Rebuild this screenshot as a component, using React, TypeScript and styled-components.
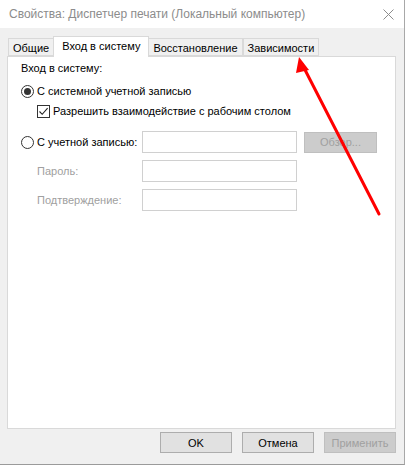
import React from "react";
import styled, { createGlobalStyle } from "styled-components";

const Global = createGlobalStyle`
  html, body { margin: 0; padding: 0; background: #ffffff; }
  body { font-family: "Liberation Sans", Arial, sans-serif; font-size: 11px; color: #000; }
  * { box-sizing: border-box; }
`;

const Window = styled.div`
  position: relative;
  width: 405px;
  height: 465px;
  background: #f0f0f0;
  border-right: 1px solid #a8a8a8;
  border-bottom: 1px solid #9a9a9a;
  box-shadow: 0 1px 2px rgba(0, 0, 0, 0.25);
  display: flex;
  flex-direction: column;
  overflow: hidden;
`;

const TitleBar = styled.div`
  height: 28px;
  background: #ffffff;
  display: flex;
  align-items: center;
  justify-content: space-between;
  padding: 0 10px 0 9px;
  color: #8c8c8c;
  font-size: 12px;
`;

const CloseIcon = styled.svg`
  width: 11px;
  height: 11px;
`;

const Body = styled.div`
  flex: 1;
  display: flex;
  flex-direction: column;
  padding: 8px 8px 0 7px;
`;

const TabStrip = styled.div`
  display: flex;
  align-items: flex-end;
  height: 20px;
  padding-left: 1px;
  position: relative;
  z-index: 1;
  font-size: 11px;
`;

const Tab = styled.div<{ $active?: boolean }>`
  height: ${(p) => (p.$active ? "21px" : "18px")};
  margin-bottom: ${(p) => (p.$active ? "-1px" : "0")};
  padding: ${(p) => (p.$active ? "0 8px 3px" : "1px 4px 0")};
  display: flex;
  align-items: center;
  background: ${(p) => (p.$active ? "#ffffff" : "#f0f0f0")};
  border: 1px solid #d9d9d9;
  border-bottom: ${(p) => (p.$active ? "none" : "1px solid #d9d9d9")};
  margin-left: ${(p) => (p.$active ? "-1px" : "0")};
  margin-right: ${(p) => (p.$active ? "-1px" : "0")};
  position: relative;
  z-index: ${(p) => (p.$active ? 2 : 1)};
  white-space: nowrap;
  & + & { border-left: ${(p) => (p.$active ? "1px solid #d9d9d9" : "none")}; }
`;

const Panel = styled.div`
  width: 389px;
  height: 373px;
  background: #ffffff;
  border: 1px solid #d9d9d9;
  padding: 3px 0 0 13px;
  display: flex;
  flex-direction: column;
`;

const Label = styled.div<{ $disabled?: boolean }>`
  height: 16px;
  line-height: 16px;
  color: ${(p) => (p.$disabled ? "#a0a0a0" : "#000")};
  white-space: nowrap;
`;

const OptionRow = styled.label<{ $indent?: number; $top?: number }>`
  display: flex;
  align-items: center;
  gap: 3px;
  margin-left: ${(p) => p.$indent ?? 0}px;
  margin-top: ${(p) => p.$top ?? 0}px;
  height: 16px;
  white-space: nowrap;
`;

const Radio = styled.span<{ $checked?: boolean }>`
  width: 13px;
  height: 13px;
  border-radius: 50%;
  border: 1px solid #333333;
  background: #ffffff;
  display: flex;
  align-items: center;
  justify-content: center;
  flex: none;
  &::after {
    content: "";
    display: ${(p) => (p.$checked ? "block" : "none")};
    width: 7px;
    height: 7px;
    border-radius: 50%;
    background: #333333;
  }
`;

const Check = styled.span`
  width: 13px;
  height: 13px;
  border: 1px solid #333333;
  background: #ffffff;
  display: flex;
  align-items: center;
  justify-content: center;
  flex: none;
`;

const AccountGrid = styled.div`
  display: grid;
  grid-template-columns: 114px 155px 73px;
  column-gap: 7px;
  row-gap: 7px;
  align-items: center;
  margin-top: 12px;
`;

const Input = styled.div`
  height: 22px;
  border: 1px solid #d0d0d0;
  background: #ffffff;
`;

const SubLabel = styled(Label)`
  padding-left: 16px;
`;

const DisabledButton = styled.div`
  height: 21px;
  background: #cccccc;
  border: 1px solid #bfbfbf;
  color: #a0a0a0;
  display: flex;
  align-items: center;
  justify-content: center;
`;

const Footer = styled.div`
  display: flex;
  justify-content: flex-end;
  gap: 10px;
  padding: 3px 0 0 0;
`;

const Button = styled.div<{ $disabled?: boolean }>`
  width: 72px;
  height: 21px;
  background: ${(p) => (p.$disabled ? "#cccccc" : "#e1e1e1")};
  border: 1px solid ${(p) => (p.$disabled ? "#bfbfbf" : "#adadad")};
  color: ${(p) => (p.$disabled ? "#a0a0a0" : "#000")};
  display: flex;
  align-items: center;
  justify-content: center;
`;

const Arrow = styled.svg`
  position: absolute;
  left: 0;
  top: 0;
  width: 405px;
  height: 467px;
  pointer-events: none;
  z-index: 10;
`;

export default function App() {
  return (
    <>
      <Global />
      <Window>
        <TitleBar>
          <span>Свойства: Диспетчер печати (Локальный компьютер)</span>
          <CloseIcon viewBox="0 0 11 11">
            <path d="M0.5 0.5 L10.5 10.5 M10.5 0.5 L0.5 10.5" stroke="#8c8c8c" strokeWidth="1" fill="none" />
          </CloseIcon>
        </TitleBar>
        <Body>
          <TabStrip>
            <Tab>Общие</Tab>
            <Tab $active>Вход в систему</Tab>
            <Tab>Восстановление</Tab>
            <Tab>Зависимости</Tab>
          </TabStrip>
          <Panel>
            <Label>Вход в систему:</Label>
            <OptionRow $top={7}>
              <Radio $checked />
              <span>С системной учетной записью</span>
            </OptionRow>
            <OptionRow $indent={16} $top={4}>
              <Check>
                <svg width="11" height="11" viewBox="0 0 11 11">
                  <path d="M1.5 5.5 L4.2 8.3 L9.6 2.2" stroke="#222" strokeWidth="1.1" fill="none" />
                </svg>
              </Check>
              <span>Разрешить взаимодействие с рабочим столом</span>
            </OptionRow>
            <AccountGrid>
              <OptionRow>
                <Radio />
                <span>С учетной записью:</span>
              </OptionRow>
              <Input />
              <DisabledButton>Обзор...</DisabledButton>
              <SubLabel $disabled>Пароль:</SubLabel>
              <Input />
              <span />
              <SubLabel $disabled>Подтверждение:</SubLabel>
              <Input />
              <span />
            </AccountGrid>
          </Panel>
          <Footer>
            <Button>OK</Button>
            <Button>Отмена</Button>
            <Button $disabled>Применить</Button>
          </Footer>
        </Body>
        <Arrow viewBox="0 0 405 467">
          <line x1="379" y1="214" x2="302" y2="64" stroke="#ff0000" strokeWidth="3" strokeLinecap="round" />
          <polygon points="299,57 309,70 296,73" fill="#ff0000" />
        </Arrow>
      </Window>
    </>
  );
}
